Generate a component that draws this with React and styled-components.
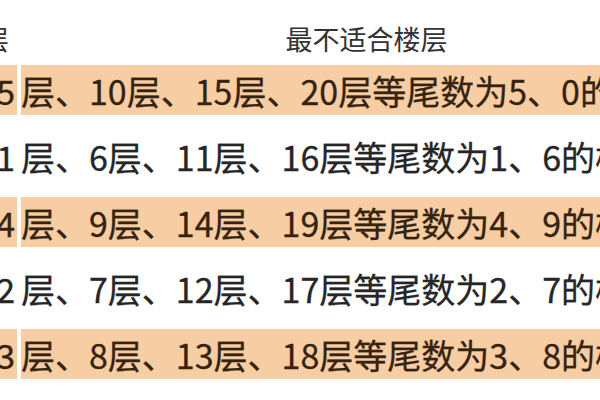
import React from "react";
import styled, { createGlobalStyle } from "styled-components";

const Global = createGlobalStyle`
  html, body {
    margin: 0;
    padding: 0;
    background: #ffffff;
  }
  body {
    width: 600px;
    height: 400px;
    overflow: hidden;
    font-family: "Noto Sans CJK SC", "Noto Sans", sans-serif;
  }
`;

const Table = styled.div`
  width: 600px;
  display: flex;
  flex-direction: column;
  overflow: hidden;
`;

const HeaderRow = styled.div`
  height: 65px;
  box-sizing: border-box;
  padding-top: 11px;
  display: flex;
  align-items: center;
  font-size: 27px;
  color: #333333;
  white-space: nowrap;
`;

const HeaderSide = styled.div`
  width: 21px;
  flex: none;
  display: flex;
  justify-content: flex-end;
  overflow: hidden;
  padding-right: 12px;
  box-sizing: border-box;
`;

const HeaderMain = styled.div`
  flex: 1;
  text-align: center;
  padding-left: 112px;
`;

const Rows = styled.div`
  display: flex;
  flex-direction: column;
  gap: 16px;
`;

const Row = styled.div`
  height: 50px;
  display: flex;
  gap: 4px;
  font-size: 34px;
  line-height: 52px;
  white-space: nowrap;
  color: ${(p) => (p.$shaded ? "#35230f" : "#262626")};
  -webkit-text-stroke: 0.3px currentColor;
`;

const SideCell = styled.div`
  width: 17px;
  flex: none;
  overflow: hidden;
  display: flex;
  justify-content: flex-end;
  padding-right: 2px;
  box-sizing: border-box;
  background: ${(p) => (p.$shaded ? "#f7cea4" : "transparent")};
`;

const MainCell = styled.div`
  flex: 1;
  overflow: hidden;
  background: ${(p) => (p.$shaded ? "#f7cea4" : "transparent")};
`;

const rows = [
  { lead: "5", rest: "层、10层、15层、20层等尾数为5、0的楼层" },
  { lead: "1", rest: "层、6层、11层、16层等尾数为1、6的楼层" },
  { lead: "4", rest: "层、9层、14层、19层等尾数为4、9的楼层" },
  { lead: "2", rest: "层、7层、12层、17层等尾数为2、7的楼层" },
  { lead: "3", rest: "层、8层、13层、18层等尾数为3、8的楼层" },
];

export default function App() {
  return (
    <>
      <Global />
      <Table>
        <HeaderRow>
          <HeaderSide>
            <span>最适合楼层</span>
          </HeaderSide>
          <HeaderMain>最不适合楼层</HeaderMain>
        </HeaderRow>
        <Rows>
          {rows.map((r, i) => {
            const shaded = i % 2 === 0;
            return (
              <Row key={i} $shaded={shaded}>
                <SideCell $shaded={shaded}>{r.lead}</SideCell>
                <MainCell $shaded={shaded}>{r.rest}</MainCell>
              </Row>
            );
          })}
        </Rows>
      </Table>
    </>
  );
}
